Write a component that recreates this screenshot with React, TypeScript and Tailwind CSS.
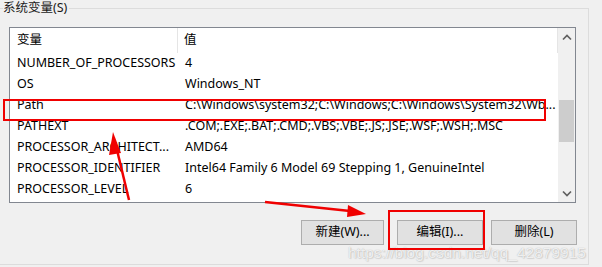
import React from "react";

const rows: [string, string][] = [
  ["NUMBER_OF_PROCESSORS", "4"],
  ["OS", "Windows_NT"],
  ["Path", "C:\\Windows\\system32;C:\\Windows;C:\\Windows\\System32\\Wb..."],
  ["PATHEXT", ".COM;.EXE;.BAT;.CMD;.VBS;.VBE;.JS;.JSE;.WSF;.WSH;.MSC"],
  ["PROCESSOR_ARCHITECT...", "AMD64"],
  ["PROCESSOR_IDENTIFIER", "Intel64 Family 6 Model 69 Stepping 1, GenuineIntel"],
  ["PROCESSOR_LEVEL", "6"],
];

const font = { fontFamily: '"Noto Sans", "Noto Sans CJK SC", sans-serif' };

function Btn({ label, w, ml }: { label: string; w: string; ml: string }) {
  return (
    <div
      className={`${w} ${ml} h-[25px] border border-[#adadad] bg-[#e1e1e1] flex items-center justify-center text-[12.5px] text-black`}
    >
      {label}
    </div>
  );
}

export default function App() {
  return (
    <div
      className="relative w-[602px] h-[267px] bg-[#f0f0f0] overflow-hidden text-black"
      style={font}
    >
      <div className="pt-[8px]">
        <div className="relative ml-[-1px] w-[590px] h-[257px] border border-[#dcdcdc]">
          <div className="absolute left-[3px] top-[-9px] bg-[#f0f0f0] pr-[2px] text-[12.5px] leading-[16px] text-[#1a1a1a]">
            系统变量(S)
          </div>
          <div className="ml-[9px] mt-[18px] w-[567px] h-[176px] border border-[#828790] bg-white flex">
            <div className="flex-1 flex flex-col overflow-hidden">
              <div className="h-[25px] flex items-center text-[12.5px]">
                <div className="w-[168px] h-full pl-[7px] flex items-center border-r border-[#e5e5e5]">
                  变量
                </div>
                <div className="flex-1 h-full pl-[6px] flex items-center border-r border-[#e5e5e5]">
                  值
                </div>
              </div>
              {rows.map(([k, v]) => (
                <div key={k} className="h-[21px] flex items-center text-[12.5px] whitespace-nowrap">
                  <div className="w-[168px] pl-[7px] shrink-0 overflow-hidden">{k}</div>
                  <div className="pl-[7px]">{v}</div>
                </div>
              ))}
            </div>
            <div className="w-[17px] bg-[#f0f0f0] flex flex-col items-center">
              <div className="h-[17px] w-full flex items-center justify-center mt-[1px]">
                <svg width="10" height="7" viewBox="0 0 10 7">
                  <path d="M1 5.5 L5 1.5 L9 5.5" stroke="#606060" strokeWidth="1.7" fill="none" />
                </svg>
              </div>
              <div className="mt-[54px] w-[15px] h-[42px] bg-[#cdcdcd]" />
              <div className="flex-1" />
              <div className="h-[17px] w-full flex items-center justify-center">
                <svg width="10" height="7" viewBox="0 0 10 7">
                  <path d="M1 1.5 L5 5.5 L9 1.5" stroke="#606060" strokeWidth="1.7" fill="none" />
                </svg>
              </div>
            </div>
          </div>
          <div className="flex mt-[17px]">
            <Btn label="新建(W)..." w="w-[83px]" ml="ml-[301px]" />
            <Btn label="编辑(I)..." w="w-[86px]" ml="ml-[13px]" />
            <Btn label="删除(L)" w="w-[86px]" ml="ml-[8px]" />
          </div>
        </div>
      </div>

      {/* watermark */}
      <div
        className="absolute left-[348px] top-[244px] text-[15.5px] leading-[18px] whitespace-nowrap"
        style={{
          fontFamily: '"Liberation Sans", Arial, sans-serif',
          color: "rgba(255,255,255,0.8)",
          textShadow: "0 0 1px rgba(120,120,120,0.55), 1px 1px 1px rgba(170,170,170,0.35)",
        }}
      >
        https://blog.csdn.net/qq_42879915
      </div>

      {/* annotations */}
      <svg className="absolute left-0 top-0" width="602" height="267" viewBox="0 0 602 267">
        <rect x="4" y="100" width="541" height="20" fill="none" stroke="#f00000" strokeWidth="2" />
        <rect x="389" y="211" width="95" height="38" fill="none" stroke="#f00000" strokeWidth="2" />
        <line x1="129" y1="200" x2="117" y2="150" stroke="#f00000" strokeWidth="2.5" />
        <polygon points="113,132 109,155 121,153" fill="#f00000" />
        <line x1="265" y1="202" x2="350" y2="211" stroke="#f00000" strokeWidth="2.5" />
        <polygon points="366,214 348,205 347,217" fill="#f00000" />
      </svg>
    </div>
  );
}
